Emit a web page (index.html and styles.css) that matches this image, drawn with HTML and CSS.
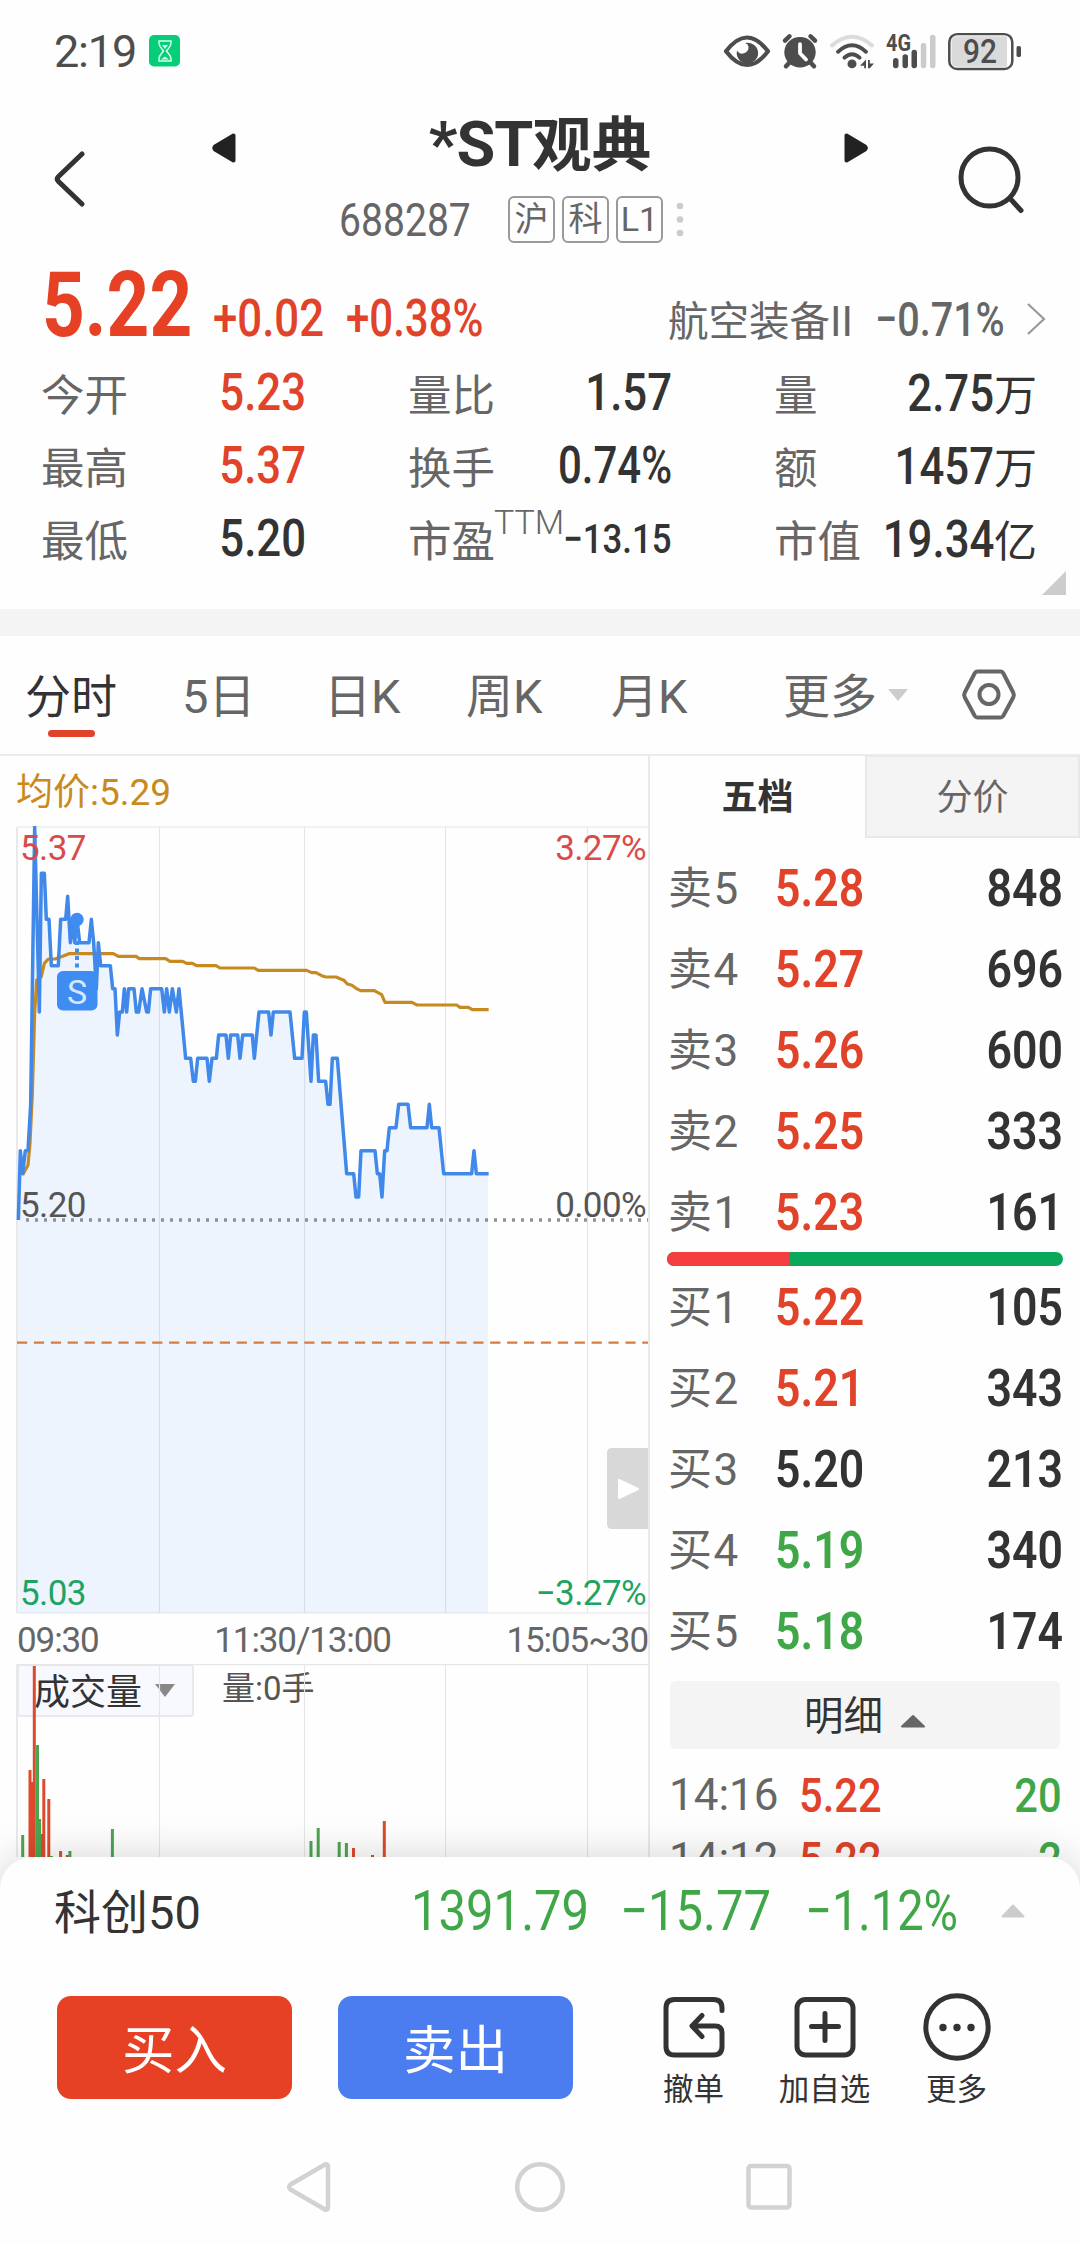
FILE: index.html
```html
<!DOCTYPE html>
<html lang="zh-CN">
<head>
<meta charset="utf-8">
<title>*ST观典 688287</title>
<link rel="stylesheet" href="styles.css">
</head>
<body>
<div class="app">
  <div class="status">
    <span class="clock">2:19</span>
    <svg class="status-app" width="32" height="32" viewBox="0 0 32 32"><rect width="31" height="31.500" rx="5" fill="#06ce78"/><g fill="none" stroke="#d8fff0" stroke-width="1.500"><path d="M10 6h12v2c0 4-3 6-4.500 8 1.500 2 4.500 4 4.500 8v2H10v-2c0-4 3-6 4.500-8C13 14 10 12 10 8z"/></g><path d="M13 10h6l-3 4zM12 24.500h8l-4-3z" fill="#d8fff0"/></svg>
    <svg class="status-icons" width="300" height="42.600" viewBox="722 30 300 44" preserveAspectRatio="none">
      <g fill="#4d4d4d">
        <path d="M726 52Q747 23.500 768 52Q747 80.500 726 52Z" fill="none" stroke="#4d4d4d" stroke-width="4.200" stroke-linejoin="round"/>
        <path d="M745 43.500a10.700 10.700 0 1 1-8 8q2.500 4 7 2.500 5-2 4.500-7-.5-2.500-3.500-3.500z"/>
        <circle cx="800" cy="53" r="15.700"/>
        <path d="M785 41l4.500-4.500M815 41l-4.500-4.500M790 63l-4 4.500M810 63l4 4.500" stroke="#4d4d4d" stroke-width="4.500" stroke-linecap="round"/>
        <path d="M800 44.500v9.500l6 6.500" fill="none" stroke="#fff" stroke-width="3.800" stroke-linecap="round" stroke-linejoin="round"/>
        <g fill="none" stroke-linecap="round" stroke-width="4">
          <path d="M832 46Q852 28 872 46" stroke="#dcdcdc"/>
          <path d="M838 52.500q14-13.500 28 0" stroke="#4d4d4d"/>
          <path d="M844.500 58.500q7.500-7 15 0" stroke="#4d4d4d"/>
        </g>
        <circle cx="852" cy="65" r="4.500"/>
        <path d="M860 67l6-6.500v9h-1.800V67zM868 61h1.800v3.500h4.200l-4.200 5H868z"/>
        <rect x="893" y="59" width="5.500" height="10.500" rx="2.700"/><rect x="902.500" y="55" width="5.500" height="14.500" rx="2.700"/><rect x="911.500" y="50.500" width="5.500" height="19" rx="2.700"/>
        <g fill="#cbcbcb"><rect x="920.800" y="43.500" width="5.500" height="26" rx="2.700"/><rect x="930" y="35" width="5.500" height="34.500" rx="2.700"/></g>
        <text class="net" x="886" y="52" textLength="25" lengthAdjust="spacingAndGlyphs">4G</text>
        <rect x="949.300" y="34.300" width="63" height="36" rx="8" fill="#fff" stroke="#4d4d4d" stroke-width="2.500"/>
        <path d="M957 36.500h50v31.500h-50q-5.500 0-5.500-5.500v-20.500q0-5.500 5.500-5.500z" fill="#dadada"/>
        <rect x="1016.500" y="46.500" width="4.500" height="11.500" rx="2"/>
        <text class="batt" x="963" y="64" textLength="34" lengthAdjust="spacingAndGlyphs">92</text>
      </g>
    </svg>
  </div>

  <header class="head">
    <svg class="back" width="34" height="58" viewBox="0 0 34 58"><path d="M29 4L5.500 26.500Q3 29 5.500 31.500L29 54" fill="none" stroke="#333" stroke-width="5" stroke-linecap="round"/></svg>
    <div class="head-mid">
      <div class="title-row">
        <svg width="26" height="32" viewBox="0 0 26 32"><path d="M3 14.500L21.500 3.500V28.500L3 17.500Q1.500 16 3 14.500z" fill="#222" stroke="#222" stroke-width="4" stroke-linejoin="round"/></svg>
        <h1><span class="lat">*ST</span>观典</h1>
        <svg width="26" height="32" viewBox="0 0 26 32"><path d="M23 14.500L4.500 3.500V28.500L23 17.500Q24.500 16 23 14.500z" fill="#222" stroke="#222" stroke-width="4" stroke-linejoin="round"/></svg>
      </div>
      <div class="sub-row">
        <span class="code"><b class="num l">688287</b></span>
        <i class="tag">沪</i><i class="tag">科</i><i class="tag">L1</i>
        <svg class="dots" width="8" height="35" viewBox="0 0 8 35" fill="#ccc"><circle cx="4" cy="4" r="3.300"/><circle cx="4" cy="17.500" r="3.300"/><circle cx="4" cy="31" r="3.300"/></svg>
      </div>
    </div>
    <svg class="search" width="68" height="72" viewBox="0 0 68 72" fill="none" stroke="#333" stroke-width="5" stroke-linecap="round"><circle cx="33.500" cy="33.500" r="28.500"/><path d="M55 55.500l10 11"/></svg>
  </header>

  <section class="quote">
    <div class="price-row">
      <span class="last"><b class="num l">5.22</b></span>
      <span class="chg"><b class="num l">+0.02</b></span>
      <span class="pct"><b class="num l tight">+0.38%</b></span>
      <span class="sector">航空装备<em>II</em></span>
      <span class="sector-pct"><b class="num l tight">−0.71%</b></span>
      <svg width="22" height="36" viewBox="0 0 22 36"><path d="M2 3l16 15L2 33" fill="none" stroke="#999" stroke-width="2.200"/></svg>
    </div>
    <dl class="stats">
      <div><dt>今开</dt><dd class="red"><b class="num r">5.23</b></dd></div>
      <div><dt>量比</dt><dd><b class="num r">1.57</b></dd></div>
      <div><dt>量</dt><dd><b class="num r">2.75</b><u>万</u></dd></div>
      <div><dt>最高</dt><dd class="red"><b class="num r">5.37</b></dd></div>
      <div><dt>换手</dt><dd><b class="num r tight">0.74%</b></dd></div>
      <div><dt>额</dt><dd><b class="num r">1457</b><u>万</u></dd></div>
      <div><dt>最低</dt><dd><b class="num r">5.20</b></dd></div>
      <div><dt>市盈<sup>TTM</sup></dt><dd class="small"><b class="num r">−13.15</b></dd></div>
      <div><dt>市值</dt><dd><b class="num r">19.34</b><u>亿</u></dd></div>
    </dl>
    <svg class="corner" width="26" height="26" viewBox="0 0 26 26"><path d="M25 1v24H1z" fill="#ccc"/></svg>
  </section>

  <nav class="tabs">
    <a class="tab on" style="width:87px">分时</a>
    <a class="tab" style="width:72px">5日</a>
    <a class="tab" style="width:72px">日K</a>
    <a class="tab" style="width:75px">周K</a>
    <a class="tab" style="width:77px">月K</a>
    <a class="tab more">更多</a>
    <svg class="tri" width="20" height="12" viewBox="0 0 20 12"><path d="M0 0h20L10 12z" fill="#ccc"/></svg>
    <svg class="hex" width="56" height="54" viewBox="0 0 56 54" fill="none" stroke="#666" stroke-width="4"><path d="M16.500 3.500h23q1.700 0 2.700 1.500l10 19.500q1.300 2.500 0 5l-10 18.500q-1 1.500-2.700 1.500h-23q-1.700 0-2.700-1.500l-10-18.500q-1.300-2.500 0-5l10-19.500q1-1.500 2.700-1.500z"/><circle cx="28" cy="26.500" r="9.500"/></svg>
  </nav>

  <main class="board">
    <section class="chart-col">
      <p class="avg">均价:5.29</p>
      <div class="chart">
        <svg width="648" height="788" viewBox="0 0 648 788">
          <path d="M17 1H648M17 787H648M159.500 1V787M304.500 1V787M445.500 1V787M587.500 1V787" fill="none" stroke="#e6e6e6" stroke-width="1.200"/>
          <path d="M17 1V787" stroke="#e9e9e9" stroke-width="2"/>
          <g transform="translate(0 -26) scale(.33333)" fill="none" stroke-linejoin="round">
            <path d="M55 2439V1260L61 1052 68 1121 76 1052H84L92 913 104 81 118 636 124 220H133L139 358H147L154 497H175L182 358H197L203 289 211 428 217 358 224 428 231 358 239 428H267L274 358 281 428 289 566 295 428 302 497H331L338 566H345L352 705 359 636H367L373 566 380 636 386 566H402L409 636H416L426 566 440 636H445L452 566H485L493 636 500 566 508 636 517 566 529 636 537 566 557 775H572L580 844H586L593 775H621L628 844 636 775H649L656 705H678L685 775 692 705H713L720 775 728 705H757L763 775 777 636H806L813 705 820 636H870L884 775H906L913 636H919L933 844 940 705H948L956 844H977L984 913H990L997 775H1012L1040 1121H1061L1068 1191H1076L1083 1052H1125L1132 1121H1139L1146 1191 1154 1052H1161L1168 983H1188L1196 913H1224L1232 983H1281L1288 913 1295 983H1317L1331 1121H1415L1422 1052 1429 1121H1464V2439Z" fill="rgba(63,140,242,.085)"/>
            <path d="M68 1125L76 1110 84 1095 90 1030 97 880 104 640 110 540 124 530 133 490 145 477H165L190 468 207 461H340L355 469H408L418 476H497L510 484H548L560 490H577L590 497H648L660 504H763L775 511H920L935 518H948L965 527 978 531H1008L1022 537 1032 541 1042 552 1056 556 1068 565 1082 572H1123L1145 584 1155 607H1236L1250 615H1370L1380 622H1405L1417 629H1466" stroke="#c68a20" stroke-width="9.500"/>
            <path stroke="#4089ea" stroke-width="10.500" d="M55 1260L61 1052 68 1121 76 1052H84L92 913 104 81 118 636 124 220H133L139 358H147L154 497H175L182 358H197L203 289 211 428 217 358 224 428 231 358 239 428H267L274 358 281 428 289 566 295 428 302 497H331L338 566H345L352 705 359 636H367L373 566 380 636 386 566H402L409 636H416L426 566 440 636H445L452 566H485L493 636 500 566 508 636 517 566 529 636 537 566 557 775H572L580 844H586L593 775H621L628 844 636 775H649L656 705H678L685 775 692 705H713L720 775 728 705H757L763 775 777 636H806L813 705 820 636H870L884 775H906L913 636H919L933 844 940 705H948L956 844H977L984 913H990L997 775H1012L1040 1121H1061L1068 1191H1076L1083 1052H1125L1132 1121H1139L1146 1191 1154 1052H1161L1168 983H1188L1196 913H1224L1232 983H1281L1288 913 1295 983H1317L1331 1121H1415L1422 1052 1429 1121H1466"/>
          </g>
          <path d="M26 394H648" stroke="#8e9196" stroke-width="3.500" stroke-dasharray="3 6"/>
          <path d="M17 516.700H648" stroke="#d97b3c" stroke-width="2.200" stroke-dasharray="10.200 6.700"/>
          <path d="M77 100V146" stroke="#3f8cf2" stroke-width="4" stroke-dasharray="4 3.500"/>
          <circle cx="77" cy="93.500" r="6.700" fill="#3f8cf2"/>
          <rect x="57" y="145" width="40.500" height="39.500" rx="6" fill="#3f8cf2"/>
          <text class="mark" x="77" y="177.500" text-anchor="middle">S</text>
        </svg>
        <span class="lab tl up">5.37</span><span class="lab tr up">3.27%</span>
        <span class="lab ml">5.20</span><span class="lab mr">0.00%</span>
        <span class="lab bl down">5.03</span><span class="lab br down">−3.27%</span>
        <span class="drawer"><svg width="41" height="81" viewBox="0 0 41 81"><path d="M5 0H41V81H5Q0 81 0 76V5Q0 0 5 0z" fill="#d8d8d8"/><path d="M12 32l19 9-19 9z" fill="#fff" stroke="#fff" stroke-width="2" stroke-linejoin="round"/></svg></span>
      </div>
      <div class="axis"><span>09:30</span><span>11:30/13:00</span><span>15:05~30</span></div>
      <div class="vol">
        <div class="vol-sel"><span>成交量</span><svg width="20" height="13" viewBox="0 0 20 13"><path d="M0 0h20L10 13z" fill="#888"/></svg></div>
        <span class="vol-val">量:0手</span>
        <svg class="bars" width="648" height="194" viewBox="0 1664 648 194">
          <path d="M17 1664.700H648M159.500 1664V1858M304.500 1664V1858M445.500 1664V1858M587.500 1664V1858" fill="none" stroke="#e6e6e6" stroke-width="1.200"/>
          <path d="M17 1664V1858" stroke="#e9e9e9" stroke-width="2"/>
          <g fill="none" stroke-width="3">
            <path stroke="#dd4a2d" d="M30 1770V1858M32.500 1782V1858M34.300 1666V1858M41.700 1834V1858M43.800 1779V1858M48.800 1799V1858M60.600 1851V1858M67.300 1855V1858M353.500 1848V1858M372.500 1855V1858M384.300 1821V1858"/>
            <path stroke="#4ba551" d="M22.700 1835V1858M37.500 1745V1858M39.600 1819V1858M51.400 1856V1858M69.900 1851V1858M112.400 1829V1858M311 1841V1858M318.200 1828V1858M339.200 1842V1858M346.400 1843V1858"/>
          </g>
        </svg>
      </div>
    </section>

    <section class="book">
      <div class="book-tabs"><a class="on">五档</a><a>分价</a></div>
      <ul class="levels">
        <li><i>卖5</i><span class="red"><b class="num l">5.28</b></span><span class="qty"><b class="num r">848</b></span></li>
        <li><i>卖4</i><span class="red"><b class="num l">5.27</b></span><span class="qty"><b class="num r">696</b></span></li>
        <li><i>卖3</i><span class="red"><b class="num l">5.26</b></span><span class="qty"><b class="num r">600</b></span></li>
        <li><i>卖2</i><span class="red"><b class="num l">5.25</b></span><span class="qty"><b class="num r">333</b></span></li>
        <li><i>卖1</i><span class="red"><b class="num l">5.23</b></span><span class="qty"><b class="num r">161</b></span></li>
      </ul>
      <div class="ratio"><span style="width:122px"></span></div>
      <ul class="levels">
        <li><i>买1</i><span class="red"><b class="num l">5.22</b></span><span class="qty"><b class="num r">105</b></span></li>
        <li><i>买2</i><span class="red"><b class="num l">5.21</b></span><span class="qty"><b class="num r">343</b></span></li>
        <li><i>买3</i><span><b class="num l">5.20</b></span><span class="qty"><b class="num r">213</b></span></li>
        <li><i>买4</i><span class="green"><b class="num l">5.19</b></span><span class="qty"><b class="num r">340</b></span></li>
        <li><i>买5</i><span class="green"><b class="num l">5.18</b></span><span class="qty"><b class="num r">174</b></span></li>
      </ul>
      <div class="detail"><span>明细</span><svg width="26" height="14" viewBox="0 0 26 14"><path d="M2 12.500L13 2l11 10.500z" fill="#666" stroke="#666" stroke-width="2" stroke-linejoin="round"/></svg></div>
      <ul class="ticks">
        <li><i>14:16</i><span class="red"><b class="num l">5.22</b></span><span class="qty green"><b class="num r">20</b></span></li>
        <li><i>14:12</i><span class="red"><b class="num l">5.22</b></span><span class="qty green"><b class="num r">2</b></span></li>
      </ul>
    </section>
  </main>

  <footer class="sheet">
    <div class="index-row">
      <span class="idx-name">科创50</span>
      <span class="v1"><b class="num l">1391.79</b></span>
      <span class="v2"><b class="num l">−15.77</b></span>
      <span class="v3"><b class="num l">−1.12%</b></span>
      <svg width="24" height="14" viewBox="0 0 24 14"><path d="M1.500 12.500L12 1.500l10.500 11z" fill="#ccc" stroke="#ccc" stroke-width="2" stroke-linejoin="round"/></svg>
    </div>
    <div class="actions">
      <button class="btn buy">买入</button>
      <button class="btn sell">卖出</button>
      <a class="act a1"><svg width="68" height="68" viewBox="0 0 68 68" fill="none" stroke="#333" stroke-width="5" stroke-linecap="round" stroke-linejoin="round"><path d="M62 17.500V15q0-8.500-8.500-8.500h-39Q6 6.500 6 15v38.500Q6 62 14.500 62h39q8.500 0 8.500-8.500V40q0-7-7-7H33M42 22.500L32 33l10 10.500"/></svg>撤单</a>
      <a class="act a2"><svg width="68" height="68" viewBox="0 0 68 68" fill="none" stroke="#333" stroke-width="5" stroke-linecap="round"><rect x="6" y="6.500" width="56" height="55.500" rx="8.500"/><path d="M34 20.500v27M20.500 33.500h27"/></svg>加自选</a>
      <a class="act a3"><svg width="68" height="68" viewBox="0 0 68 68"><circle cx="34" cy="34" r="31.200" fill="none" stroke="#333" stroke-width="5"/><g fill="#333"><circle cx="20" cy="34.500" r="3.700"/><circle cx="34" cy="34.500" r="3.700"/><circle cx="48" cy="34.500" r="3.700"/></g></svg>更多</a>
    </div>
    <svg class="sysnav" width="1080" height="80" viewBox="0 2147 1080 80" fill="none" stroke="#d2d2d2" stroke-width="4.500" stroke-linejoin="round"><path d="M290.500 2184.500L325 2164.500Q328 2163.500 328 2166.500V2207.500Q328 2210.500 325 2209.500L290.500 2189.500Q288 2187 290.500 2184.500z"/><circle cx="540" cy="2187" r="22.800"/><rect x="748.500" y="2166" width="41" height="41.500" rx="2.500"/></svg>
  </footer>
</div>
</body>
</html>
```
FILE: styles.css
```css
* { box-sizing: border-box; margin: 0; padding: 0; }
body {
  width: 1080px; height: 2244px; overflow: hidden; background: #fefefe; color: #333;
  font-family: Roboto, "Noto Sans CJK SC", sans-serif; white-space: nowrap;
}
svg { display: block; flex: none; }
i, em, u { font-style: normal; text-decoration: none; }
ul { list-style: none; }
.app { display: flex; flex-direction: column; height: 2244px; }
.num { display: inline-block; font-weight: 500; transform: scaleX(.85); }
.num.l { transform-origin: 0 50%; }
.num.r { transform-origin: 100% 50%; }
.num.tight { transform: scaleX(.815); }
.red { color: #e04329; }
.green { color: #40a748; }

/* status bar */
.status { height: 102px; display: flex; align-items: center; padding-left: 54px; }
.clock { width: 95px; font-size: 45px; letter-spacing: -1.2px; color: #4d4d4d; }
.status-icons { margin-left: 541px; }
.net { font: 700 24px Roboto, sans-serif; }
.batt { font: 500 34px Roboto, sans-serif; }

/* header */
.head { height: 160px; display: flex; padding-left: 53px; }
.back { margin-top: 48px; }
.head-mid { width: 656px; margin-left: 125px; }
.title-row { height: 82px; padding-top: 10px; display: flex; align-items: center; justify-content: space-between; }
h1 { font-size: 59.500px; font-weight: 700; line-height: 80px; margin-bottom: 6px; }
h1 .lat { font-size: 63px; letter-spacing: -1px; }
.sub-row { height: 71px; display: flex; align-items: center; padding-left: 127px; }
.code { width: 169px; font-size: 46px; color: #666; }
.code .num { font-weight: 400; }
.tag { width: 47px; height: 47px; margin-right: 7px; border: 2px solid #999; border-radius: 6px; font-size: 34px; line-height: 42px; text-align: center; color: #666; }
.dots { margin-left: 6px; }
.search { margin-left: 88px; margin-top: 42px; }

/* quote */
.quote { height: 374px; border-bottom: 27px solid #f4f4f4; position: relative; }
.price-row { height: 94px; display: flex; align-items: baseline; padding-left: 42px; color: #e04329; line-height: 87px; }
.price-row > * { flex: none; }
.price-row svg { align-self: center; margin-top: 19px; }
.last { width: 171px; font-size: 90px; color: #e74125; }
.last .num { font-weight: 700; transform: scaleX(.83); }
.chg { width: 133px; font-size: 51.500px; }
.pct { width: 322px; font-size: 51.500px; }
.sector { width: 207px; font-size: 40.500px; color: #666; }
.sector em { font-size: 42px; }
.sector-pct { width: 151px; font-size: 48.500px; color: #666; }
.stats { display: grid; grid-template-columns: 265px 264px 263px; column-gap: 102px; grid-auto-rows: 73px; padding-left: 41px; }
.stats > div { display: flex; align-items: center; }
dt { font-size: 43.500px; color: #666; position: relative; }
dt sup { position: absolute; left: 86px; top: -2px; font-size: 34px; line-height: 34px; font-weight: 300; }
dd { flex: 1; width: 0; display: flex; justify-content: flex-end; align-items: baseline; font-size: 51.500px; }
dd u { font-size: 43px; font-weight: 400; }
dd.small { font-size: 41px; }
.corner { position: absolute; left: 1041px; top: 308px; }

/* period tabs */
.tabs { height: 120px; display: flex; align-items: center; padding-left: 25px; border-bottom: 2px solid #ebebeb; }
.tab { font-size: 47px; color: #666; line-height: 118px; padding-top: 3px; margin-right: 70px; position: relative; }
.tab.on { color: #333; font-size: 46px; }
.tab.on::after { content: ""; position: absolute; left: 23px; top: 95px; width: 47px; height: 7px; border-radius: 4px; background: #e04329; }
.tab.more { margin: 0 11px 0 25px; }
.hex { margin-left: 53px; }

/* board */
.board { height: 1101px; display: flex; overflow: hidden; }
.chart-col { width: 650px; border-right: 2px solid #e9e9e9; }
.avg { height: 70px; padding-left: 16px; font-size: 37px; line-height: 74px; color: #c98a1b; }
.chart { position: relative; height: 788px; }
.lab { position: absolute; font-size: 35px; line-height: 36px; letter-spacing: -.6px; color: #555; }
.lab.up { color: #d94b4b; }
.lab.down { color: #1ea362; }
.tl, .ml, .bl { left: 20px; }
.tr, .mr, .br { right: 2px; }
.tl, .tr { top: 5px; }
.ml, .mr { top: 362px; }
.bl, .br { top: 750px; }
.mark { font: 400 34px Roboto, sans-serif; fill: #d5e8fd; }
.drawer { position: absolute; right: 0; top: 622px; }
.axis { height: 50px; padding-left: 17px; display: flex; justify-content: space-between; font-size: 35px; line-height: 53px; letter-spacing: -1.1px; color: #666; }
.vol { position: relative; height: 194px; display: flex; }
.vol-sel { width: 177px; height: 53px; margin-left: 17px; padding-left: 15px; display: flex; align-items: center; gap: 13px; background: #f8f9fe; border: 2px solid #e9e9ec; border-radius: 4px; font-size: 36px; }
.vol-sel span { margin-bottom: 3px; }
.vol-val { margin-left: 28px; font-size: 33px; line-height: 49px; color: #555; }
.bars { position: absolute; left: 0; top: 0; }
.vol-sel, .vol-val { z-index: 0; }

/* order book */
.book { width: 430px; }
.book-tabs { display: flex; height: 82px; }
.book-tabs a { width: 215px; background: #f4f4f4; border: 2px solid #e8e8e8; border-top-width: 1px; color: #666; font-size: 36px; line-height: 82px; text-align: center; }
.book-tabs .on { background: none; border: 0; color: #333; font-weight: 700; line-height: 84px; }
.levels li { height: 81px; display: flex; align-items: center; padding: 0 17px 0 18px; font-size: 52.500px; }
.levels:first-of-type { padding-top: 9px; }
.levels i { width: 107px; margin-bottom: 5px; font-size: 44px; letter-spacing: 1.5px; color: #666; }
.levels .num { font-weight: 600; }
.qty { margin-left: auto; }
.ratio { height: 14px; margin: 0 17px; border-radius: 7px; overflow: hidden; background: #0aa85a; }
.ratio span { display: block; height: 14px; background: #f53e40; }
.detail { height: 68px; margin: 10px 20px 14px; display: flex; justify-content: center; align-items: center; gap: 17px; background: #f4f4f4; border-radius: 6px; font-size: 39.500px; }
.detail span { margin-bottom: 5px; }
.detail svg { margin-top: 11px; }
.ticks li { height: 64px; display: flex; align-items: center; padding: 0 18px 0 19px; font-size: 49px; }
.ticks i { width: 130px; font-size: 44px; color: #666; }

/* bottom sheet */
.sheet { height: 387px; background: #fefefe; border-radius: 32px 32px 0 0; box-shadow: 0 0 40px rgba(0,0,0,.17); position: relative; }
.index-row { height: 108px; display: flex; align-items: center; color: #40a748; font-size: 56px; }
.index-row .num { font-weight: 400; transform: scaleX(.875); }
.index-row .v3 .num { transform: scaleX(.84); }
.idx-name { width: 360px; padding-left: 54px; margin-bottom: 6px; font-size: 47px; color: #333; }
.v1 { width: 209px; margin-left: 51px; }
.v2 { width: 185px; }
.v3 { width: 196px; }
.actions { display: flex; height: 150px; padding: 31px 0 0 57px; }
.btn { width: 235px; height: 103px; border: 0; border-radius: 14px; color: #fff; font: 400 52.500px/101px "Noto Sans CJK SC", sans-serif; margin-right: 46px; padding-bottom: 3px; }
.buy { background: #e74125; }
.sell { background: #4b7df0; }
.act { width: 131px; margin-top: -3px; display: flex; flex-direction: column; align-items: center; font-size: 30.500px; line-height: 57px; }
.a1 { margin-left: 9px; }
.a3 { margin-left: 1px; }
.sysnav { margin-top: 32px; }
```
